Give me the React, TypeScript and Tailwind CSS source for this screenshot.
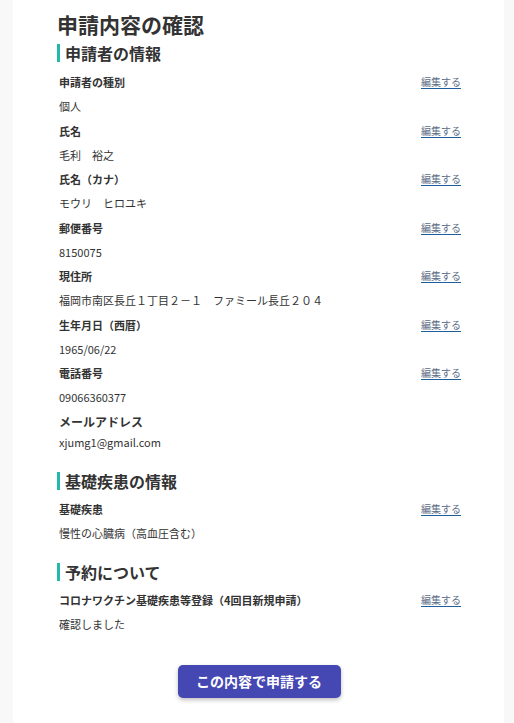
const font = { fontFamily: '"Noto Sans CJK JP", "Noto Sans", sans-serif' };

type Row = { label: string; value: string; edit?: boolean };

const applicant: Row[] = [
  { label: '申請者の種別', value: '個人', edit: true },
  { label: '氏名', value: '毛利　裕之', edit: true },
  { label: '氏名（カナ）', value: 'モウリ　ヒロユキ', edit: true },
  { label: '郵便番号', value: '8150075', edit: true },
  { label: '現住所', value: '福岡市南区長丘１丁目２－１　ファミール長丘２０４', edit: true },
  { label: '生年月日（西暦）', value: '1965/06/22', edit: true },
  { label: '電話番号', value: '09066360377', edit: true },
];

function EditLink() {
  return (
    <a
      href="#"
      className="text-[10px] text-[#5d6d86] underline decoration-[#1f5e9c] underline-offset-2"
    >
      編集する
    </a>
  );
}

function Heading({ children, className = '' }: { children: React.ReactNode; className?: string }) {
  return (
    <h2 className={`flex items-center leading-[24px] text-[16px] font-bold text-[#333] ${className}`}>
      <span className="mr-[5px] h-[18px] w-[3px] bg-[#22b8aa]" />
      {children}
    </h2>
  );
}

function Item({ label, value, edit }: Row) {
  return (
    <div>
      <div className="flex items-center justify-between leading-[24.25px]">
        <span className="pl-[2px] text-[11px] font-semibold text-[#333]">{label}</span>
        {edit && <EditLink />}
      </div>
      <div className="pl-[2px] leading-[24.25px] text-[11px] text-[#333]">{value}</div>
    </div>
  );
}

export default function App() {
  return (
    <div className="min-h-[723px] bg-[#f8f8f8] pl-[13px] pr-[10px]" style={font}>
      <div className="min-h-[723px] bg-white pl-[44px] pr-[43px] pt-[10px] pb-10">
        <h1 className="leading-[28px] text-[21px] font-bold text-[#333]">申請内容の確認</h1>

        <Heading className="mt-[3px]">申請者の情報</Heading>
        <div className="mt-[5px]">
          {applicant.map((r) => (
            <Item key={r.label} {...r} />
          ))}
        </div>
        <div className="mt-[2.5px] pl-[2px] leading-[20px] text-[12px] font-semibold text-[#333]">
          メールアドレス
        </div>
        <div className="pl-[2px] leading-[20px] text-[11px] text-[#333]">xjumg1@gmail.com</div>

        <Heading className="mt-[17px]">基礎疾患の情報</Heading>
        <div className="mt-[4px]">
          <Item label="基礎疾患" value="慢性の心臓病（高血圧含む）" edit />
        </div>

        <Heading className="mt-[14.5px]">予約について</Heading>
        <div className="mt-[4px]">
          <Item label="コロナワクチン基礎疾患等登録（4回目新規申請）" value="確認しました" edit />
        </div>

        <div className="mt-[28px] flex justify-center">
          <button className="h-[33px] w-[163px] rounded-[5px] bg-[#4547b3] text-[14px] font-bold text-white shadow-[0_2px_4px_rgba(0,0,0,0.25)]">
            この内容で申請する
          </button>
        </div>
      </div>
    </div>
  );
}
